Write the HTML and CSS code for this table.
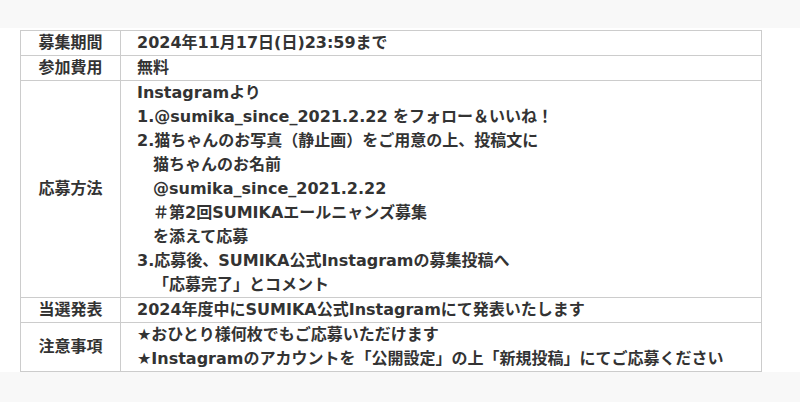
FILE: index.html
```html
<!DOCTYPE html>
<html lang="ja">
<head>
<meta charset="utf-8">
<title>応募要項</title>
<link rel="stylesheet" href="styles.css">
</head>
<body>
<div class="band band-top"></div>
<main class="main">
  <table class="info">
    <tr>
      <th>募集期間</th>
      <td>2024年11月17日(日)23:59まで</td>
    </tr>
    <tr>
      <th>参加費用</th>
      <td>無料</td>
    </tr>
    <tr>
      <th>応募方法</th>
      <td>
        <div>Instagramより</div>
        <div>1.@sumika_since_2021.2.22 をフォロー＆いいね！</div>
        <div>2.猫ちゃんのお写真（静止画）をご用意の上、投稿文に</div>
        <div class="indent">猫ちゃんのお名前</div>
        <div class="indent">@sumika_since_2021.2.22</div>
        <div class="indent">＃第2回SUMIKAエールニャンズ募集</div>
        <div class="indent">を添えて応募</div>
        <div>3.応募後、SUMIKA公式Instagramの募集投稿へ</div>
        <div class="indent">「応募完了」とコメント</div>
      </td>
    </tr>
    <tr>
      <th>当選発表</th>
      <td>2024年度中にSUMIKA公式Instagramにて発表いたします</td>
    </tr>
    <tr>
      <th>注意事項</th>
      <td>
        <div>★おひとり様何枚でもご応募いただけます</div>
        <div>★Instagramのアカウントを「公開設定」の上「新規投稿」にてご応募ください</div>
      </td>
    </tr>
  </table>
</main>
<div class="band band-bottom"></div>
</body>
</html>
```

FILE: styles.css
```css
html, body {
  margin: 0;
  padding: 0;
  background: #ffffff;
}

body {
  font-family: "DejaVu Sans", "Noto Sans CJK JP", sans-serif;
  font-weight: bold;
  font-size: 16px;
  line-height: 24px;
  color: #333333;
  width: 800px;
  height: 402px;
  overflow: hidden;
}

.band {
  background: #f8f8f8;
}

.band-top {
  height: 28px;
}

.band-bottom {
  height: 30px;
}

.main {
  padding: 2px 0 0 20px;
  height: 342px;
}

.info {
  border-collapse: collapse;
  width: 742px;
}

.info th,
.info td {
  border: 1px solid #cccccc;
  padding: 0;
  vertical-align: middle;
}

.info th {
  width: 99px;
  text-align: center;
  font-weight: bold;
}

.info td {
  text-align: left;
  padding-left: 16px;
}

.indent {
  padding-left: 16px;
}
```
